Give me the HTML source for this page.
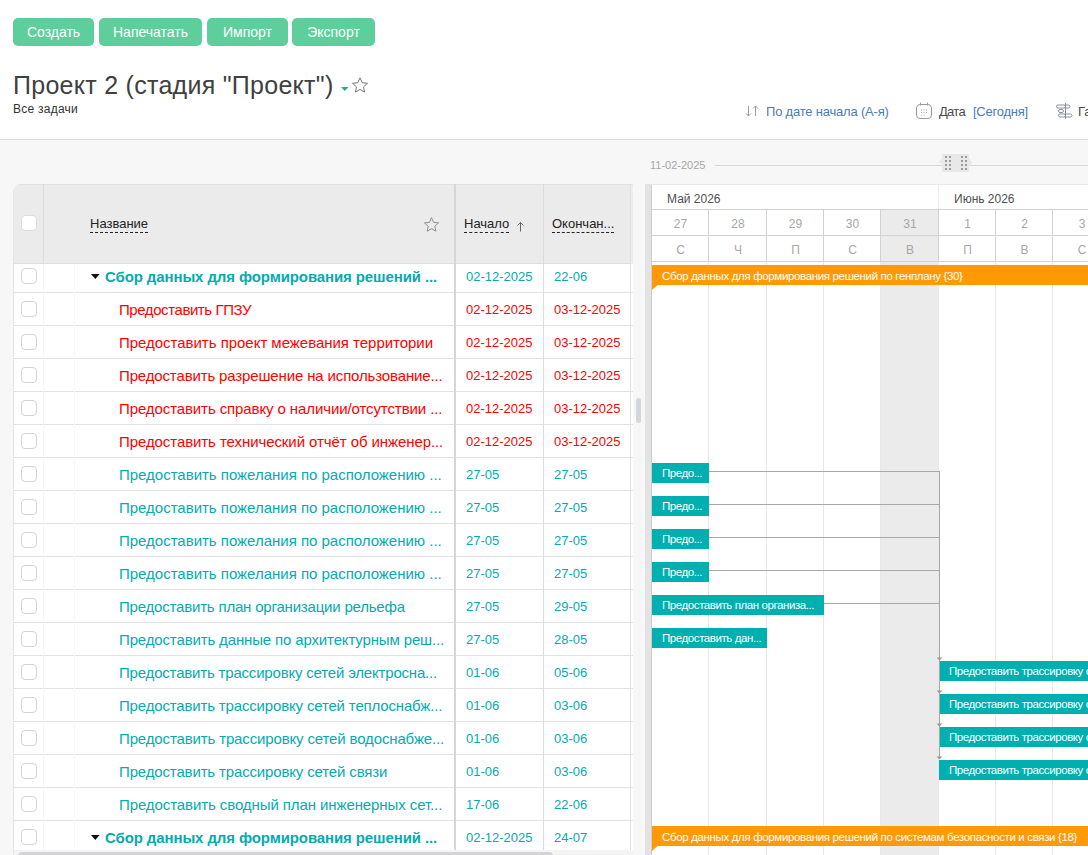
<!DOCTYPE html>
<html lang="ru"><head><meta charset="utf-8"><title>Проект 2</title>
<style>
*{box-sizing:border-box;margin:0;padding:0}
html,body{width:1088px;height:855px;overflow:hidden;background:#f7f7f7;font-family:"Liberation Sans",sans-serif;color:#333}
.abs{position:absolute}
#top{position:absolute;left:0;top:0;width:1088px;height:140px;background:#fff;border-bottom:1px solid #dedede}
.btn{position:absolute;top:18px;height:28px;border-radius:5px;background:#5ecf9c;color:#fff;font-size:14px;line-height:28px;text-align:center;white-space:nowrap}
#title{position:absolute;left:13px;top:70px;font-size:25px;line-height:30px;color:#404040;white-space:nowrap;letter-spacing:.27px}
#sub{letter-spacing:.25px;position:absolute;left:13px;top:101px;font-size:12px;line-height:16px;color:#333;white-space:nowrap}
.tb{position:absolute;top:103px;font-size:13px;line-height:18px;white-space:nowrap;color:#4d7bb7}
#grid{position:absolute;left:13px;top:184px;width:620px;height:671px;background:#fff;border-top-left-radius:8px;overflow:hidden;border-left:1px solid #e6e6e6}
#ghead{position:absolute;left:-1px;top:0;width:621px;height:80px;background:#ebebeb;border-top:1px solid #e2e2e2;border-bottom:1px solid #dfdfdf}
.row{position:absolute;left:-1px;width:620px;height:33px;border-bottom:1px solid #e2e2e2;font-size:15px;line-height:34px;white-space:nowrap}
.row span{position:absolute;top:0}
.cb{position:absolute;left:8px;width:16px;height:16px;border:1px solid #d4d4d4;border-radius:4px;background:#fff}
.g{color:#05abae;font-weight:bold}
.t{color:#05abae}
.r{color:#ff0000}
.d{font-size:13px}
.vl{position:absolute;top:0;bottom:0;background:#e2e2e2}
#gantt{position:absolute;left:651px;top:184px;width:437px;height:671px;background:#fff;overflow:hidden}
.bar{position:absolute;height:20px;background:#00b0b0;color:#fff;font-size:11.5px;letter-spacing:-.42px;line-height:21px;padding-left:10px;white-space:nowrap;overflow:hidden}
.obar{position:absolute;left:1px;height:20px;background:#ff9a05;color:#fff;font-size:11.5px;letter-spacing:-.35px;line-height:22px;overflow:hidden;padding-left:10px;white-space:nowrap;width:437px}
.hl{position:absolute;height:1px;background:#a8a8a8}
.hd{position:absolute;font-size:12px;line-height:16px}
</style></head><body>
<div id="top">
<div class="btn" style="left:13px;width:81px">Создать</div>
<div class="btn" style="left:99px;width:103px">Напечатать</div>
<div class="btn" style="left:207px;width:81px">Импорт</div>
<div class="btn" style="left:292px;width:83px">Экспорт</div>
<div id="title">Проект 2 (стадия "Проект")</div>
<svg class="abs" style="left:340px;top:86px" width="10" height="6" viewBox="0 0 10 6"><path d="M1 1h7.500L4.750 5z" fill="#1fb47a"/></svg>
<svg class="abs" style="left:351px;top:76px" width="18" height="18" viewBox="0 0 18 18"><path d="M9 1.800l2.200 4.900 5.300.6-4 3.600 1.100 5.200L9 13.400l-4.600 2.700 1.100-5.200-4-3.600 5.300-.6z" fill="none" stroke="#777" stroke-width="1"/></svg>
<div id="sub">Все задачи</div>
<svg class="abs" style="left:744px;top:104px" width="16" height="14" viewBox="0 0 16 14" fill="none" stroke="#9aa0a8" stroke-width="1"><path d="M4.500 2v10M2 9.500L4.500 12 7 9.500M11.500 12V2M9 4.500L11.500 2 14 4.500"/></svg>
<div class="tb" style="left:766px;letter-spacing:-.2px">По дате начала (А-я)</div>
<svg class="abs" style="left:915px;top:101px" width="18" height="19" viewBox="0 0 18 19" fill="none" stroke="#9a9a9a" stroke-width="1"><rect x="1.500" y="3.500" width="15" height="14" rx="3.500"/><path d="M5.500 1.500v3M12.500 1.500v3"/><path d="M6 9h1M8.500 9h1M11 9h1M6 11.500h1M8.500 11.500h1M11 11.500h1M6 14h1M8.500 14h1" stroke="#b0b0b0"/></svg>
<div class="tb" style="left:939px;color:#4a4a4a;letter-spacing:-.7px">Дата</div>
<div class="tb" style="left:973px;letter-spacing:-.25px">[Сегодня]</div>
<svg class="abs" style="left:1055px;top:102px" width="18" height="18" viewBox="0 0 18 18" fill="none" stroke="#8a909a" stroke-width="1"><path d="M10.500 1v16"/><rect x="1.500" y="3" width="9" height="3" rx="1.500"/><path d="M10.500 3h3a1.500 1.500 0 0 1 0 3h-3"/><rect x="3.500" y="7.500" width="5" height="3" rx="1.500"/><rect x="3.500" y="12" width="7" height="3" rx="1.500"/><path d="M10.500 12h5a1.500 1.500 0 0 1 0 3h-5"/></svg>
<div class="tb" style="left:1078px;color:#4a4a4a">Га</div>
</div>

<div class="abs" style="left:650px;top:158px;font-size:11px;line-height:14px;color:#a6a6a6;white-space:nowrap">11-02-2025</div>
<div class="abs" style="left:715px;top:165px;width:373px;height:1px;background:#d6d6d6"></div>
<svg class="abs" style="left:938px;top:154px" width="35" height="18" viewBox="0 0 35 18"><path d="M4 9.500L0.500 8.500 4 4.500zM31 4.500L34.500 8.500 31 12.500z" fill="#e8e8e8"/><rect x="4" y="0" width="27" height="18" fill="#e8e8e8"/><g fill="#9a9a9a"><g id="dd"><rect x="7" y="2" width="2" height="2"/><rect x="11" y="2" width="2" height="2"/><rect x="7" y="6" width="2" height="2"/><rect x="11" y="6" width="2" height="2"/><rect x="7" y="10" width="2" height="2"/><rect x="11" y="10" width="2" height="2"/><rect x="7" y="14" width="2" height="2"/><rect x="11" y="14" width="2" height="2"/></g><use href="#dd" x="16"/></g></svg>

<div id="grid">
<div class="row" style="top:76px"><i class="cb" style="top:8px"></i><svg class="abs" style="left:78px;top:13px" width="9" height="7" viewBox="0 0 9 7"><path d="M0 1h8.600L4.300 6z" fill="#111"/></svg><span class="g" style="left:92px;letter-spacing:-0.108px">Сбор данных для формирования решений ...</span><span class="d t" style="left:453px">02-12-2025</span><span class="d t" style="left:541px">22-06</span></div>
<div class="row" style="top:109px"><i class="cb" style="top:8px"></i><span class="r" style="left:106px;letter-spacing:-0.425px">Предоставить ГПЗУ</span><span class="d r" style="left:453px">02-12-2025</span><span class="d r" style="left:541px">03-12-2025</span></div>
<div class="row" style="top:142px"><i class="cb" style="top:8px"></i><span class="r" style="left:106px;letter-spacing:-0.026px">Предоставить проект межевания территории</span><span class="d r" style="left:453px">02-12-2025</span><span class="d r" style="left:541px">03-12-2025</span></div>
<div class="row" style="top:175px"><i class="cb" style="top:8px"></i><span class="r" style="left:106px;letter-spacing:-0.143px">Предоставить разрешение на использование...</span><span class="d r" style="left:453px">02-12-2025</span><span class="d r" style="left:541px">03-12-2025</span></div>
<div class="row" style="top:208px"><i class="cb" style="top:8px"></i><span class="r" style="left:106px;letter-spacing:-0.100px">Предоставить справку о наличии/отсутствии ...</span><span class="d r" style="left:453px">02-12-2025</span><span class="d r" style="left:541px">03-12-2025</span></div>
<div class="row" style="top:241px"><i class="cb" style="top:8px"></i><span class="r" style="left:106px;letter-spacing:-0.079px">Предоставить технический отчёт об инженер...</span><span class="d r" style="left:453px">02-12-2025</span><span class="d r" style="left:541px">03-12-2025</span></div>
<div class="row" style="top:274px"><i class="cb" style="top:8px"></i><span class="t" style="left:106px;letter-spacing:-0.012px">Предоставить пожелания по расположению ...</span><span class="d t" style="left:453px">27-05</span><span class="d t" style="left:541px">27-05</span></div>
<div class="row" style="top:307px"><i class="cb" style="top:8px"></i><span class="t" style="left:106px;letter-spacing:-0.012px">Предоставить пожелания по расположению ...</span><span class="d t" style="left:453px">27-05</span><span class="d t" style="left:541px">27-05</span></div>
<div class="row" style="top:340px"><i class="cb" style="top:8px"></i><span class="t" style="left:106px;letter-spacing:-0.012px">Предоставить пожелания по расположению ...</span><span class="d t" style="left:453px">27-05</span><span class="d t" style="left:541px">27-05</span></div>
<div class="row" style="top:373px"><i class="cb" style="top:8px"></i><span class="t" style="left:106px;letter-spacing:-0.012px">Предоставить пожелания по расположению ...</span><span class="d t" style="left:453px">27-05</span><span class="d t" style="left:541px">27-05</span></div>
<div class="row" style="top:406px"><i class="cb" style="top:8px"></i><span class="t" style="left:106px;letter-spacing:-0.194px">Предоставить план организации рельефа</span><span class="d t" style="left:453px">27-05</span><span class="d t" style="left:541px">29-05</span></div>
<div class="row" style="top:439px"><i class="cb" style="top:8px"></i><span class="t" style="left:106px;letter-spacing:-0.143px">Предоставить данные по архитектурным реш...</span><span class="d t" style="left:453px">27-05</span><span class="d t" style="left:541px">28-05</span></div>
<div class="row" style="top:472px"><i class="cb" style="top:8px"></i><span class="t" style="left:106px;letter-spacing:-0.186px">Предоставить трассировку сетей электросна...</span><span class="d t" style="left:453px">01-06</span><span class="d t" style="left:541px">05-06</span></div>
<div class="row" style="top:505px"><i class="cb" style="top:8px"></i><span class="t" style="left:106px;letter-spacing:-0.163px">Предоставить трассировку сетей теплоснабж...</span><span class="d t" style="left:453px">01-06</span><span class="d t" style="left:541px">03-06</span></div>
<div class="row" style="top:538px"><i class="cb" style="top:8px"></i><span class="t" style="left:106px;letter-spacing:-0.140px">Предоставить трассировку сетей водоснабже...</span><span class="d t" style="left:453px">01-06</span><span class="d t" style="left:541px">03-06</span></div>
<div class="row" style="top:571px"><i class="cb" style="top:8px"></i><span class="t" style="left:106px;letter-spacing:-0.149px">Предоставить трассировку сетей связи</span><span class="d t" style="left:453px">01-06</span><span class="d t" style="left:541px">03-06</span></div>
<div class="row" style="top:604px"><i class="cb" style="top:8px"></i><span class="t" style="left:106px;letter-spacing:-0.090px">Предоставить сводный план инженерных сет...</span><span class="d t" style="left:453px">17-06</span><span class="d t" style="left:541px">22-06</span></div>
<div class="row" style="top:637px"><i class="cb" style="top:8px"></i><svg class="abs" style="left:78px;top:13px" width="9" height="7" viewBox="0 0 9 7"><path d="M0 1h8.600L4.300 6z" fill="#111"/></svg><span class="g" style="left:92px;letter-spacing:-0.108px">Сбор данных для формирования решений ...</span><span class="d t" style="left:453px">02-12-2025</span><span class="d t" style="left:541px">24-07</span></div>
<div class="vl" style="left:29px;width:1px;background:#f6f6f6"></div>
<div class="vl" style="left:60px;width:1px;background:#f8f8f8"></div>
<div id="ghead">
<i class="cb" style="top:30px;left:8px;border-color:#dcdcdc"></i>
<div class="abs" style="left:77px;top:30px;font-size:13px;line-height:17px;color:#222;border-bottom:1px dashed #222;white-space:nowrap">Название</div>
<svg class="abs" style="left:410px;top:31px" width="17" height="17" viewBox="0 0 18 18"><path d="M9 1.800l2.200 4.900 5.300.6-4 3.600 1.100 5.200L9 13.400l-4.600 2.700 1.100-5.200-4-3.600 5.300-.6z" fill="none" stroke="#8a8a8a" stroke-width="1"/></svg>
<div class="abs" style="left:451px;top:30px;font-size:13px;line-height:17px;color:#222;border-bottom:1px dashed #222;white-space:nowrap">Начало</div>
<svg class="abs" style="left:503px;top:36px" width="9" height="11" viewBox="0 0 9 11" fill="none" stroke="#666" stroke-width="1"><path d="M4.500 10.500V1.500M1.500 4.500L4.500 1.500 7.500 4.500"/></svg>
<div class="abs" style="left:539px;top:30px;font-size:13px;line-height:17px;color:#222;border-bottom:1px dashed #222;white-space:nowrap">Окончан...</div>
</div>
<div class="vl" style="left:29px;width:1px;height:79px;background:#dcdcdc"></div>
<div class="vl" style="left:440px;width:2px;background:#d6d6d6"></div>
<div class="vl" style="left:529px;width:1px;background:#dcdcdc"></div>
<div class="abs" style="left:617px;top:1px;width:3px;height:79px;background:#eeeeee"></div>
<div class="vl" style="left:616px;width:1px;background:#e0e0e0"></div>
<div class="abs" style="left:-1px;top:666px;width:620px;height:5px;background:#f4f4f4"></div>
<div class="abs" style="left:4px;top:668px;width:535px;height:4px;background:#d4d4d8;border-radius:4px 4px 0 0"></div>
</div>

<div class="abs" style="left:645px;top:184px;width:6px;height:671px;background:#e3e3e3"></div>
<div class="abs" style="left:636px;top:398px;width:5px;height:25px;background:#d3d6da;border-radius:3px"></div>

<div id="gantt">
<div class="abs" style="left:229px;top:25px;width:59px;height:646px;background:#ebebeb"></div>
<div class="abs" style="left:0;top:0;width:1px;height:671px;background:#cdcdcd"></div>
<div class="abs" style="left:57px;top:25px;width:1px;height:646px;background:#e8e8e8"></div>
<div class="abs" style="left:57px;top:25px;width:1px;height:53px;background:#d2d2d2"></div>
<div class="abs" style="left:115px;top:25px;width:1px;height:646px;background:#e8e8e8"></div>
<div class="abs" style="left:115px;top:25px;width:1px;height:53px;background:#d2d2d2"></div>
<div class="abs" style="left:172px;top:25px;width:1px;height:646px;background:#e8e8e8"></div>
<div class="abs" style="left:172px;top:25px;width:1px;height:53px;background:#d2d2d2"></div>
<div class="abs" style="left:229px;top:25px;width:1px;height:646px;background:#e8e8e8"></div>
<div class="abs" style="left:229px;top:25px;width:1px;height:53px;background:#d2d2d2"></div>
<div class="abs" style="left:287px;top:25px;width:1px;height:646px;background:#e8e8e8"></div>
<div class="abs" style="left:287px;top:25px;width:1px;height:53px;background:#d2d2d2"></div>
<div class="abs" style="left:344px;top:25px;width:1px;height:646px;background:#e8e8e8"></div>
<div class="abs" style="left:344px;top:25px;width:1px;height:53px;background:#d2d2d2"></div>
<div class="abs" style="left:401px;top:25px;width:1px;height:646px;background:#e8e8e8"></div>
<div class="abs" style="left:401px;top:25px;width:1px;height:53px;background:#d2d2d2"></div>
<div class="abs" style="left:287px;top:0;width:1px;height:26px;background:#ececec"></div>
<div class="abs" style="left:0;top:0;width:437px;height:1px;background:#e8e8e8"></div>
<div class="abs" style="left:0;top:25px;width:437px;height:1px;background:#d2d2d2"></div>
<div class="abs" style="left:0;top:51px;width:437px;height:1px;background:#d2d2d2"></div>
<div class="abs" style="left:0;top:77px;width:437px;height:1px;background:#d2d2d2"></div>
<div class="hd" style="left:16px;top:7px;color:#505050">Май 2026</div>
<div class="hd" style="left:303px;top:7px;color:#505050">Июнь 2026</div>
<div class="hd" style="left:1px;top:32px;width:57px;text-align:center;color:#a6a6a6">27</div>
<div class="hd" style="left:1px;top:58px;width:57px;text-align:center;color:#a6a6a6">С</div>
<div class="hd" style="left:58px;top:32px;width:58px;text-align:center;color:#a6a6a6">28</div>
<div class="hd" style="left:58px;top:58px;width:58px;text-align:center;color:#a6a6a6">Ч</div>
<div class="hd" style="left:116px;top:32px;width:57px;text-align:center;color:#a6a6a6">29</div>
<div class="hd" style="left:116px;top:58px;width:57px;text-align:center;color:#a6a6a6">П</div>
<div class="hd" style="left:173px;top:32px;width:57px;text-align:center;color:#a6a6a6">30</div>
<div class="hd" style="left:173px;top:58px;width:57px;text-align:center;color:#a6a6a6">С</div>
<div class="hd" style="left:230px;top:32px;width:58px;text-align:center;color:#a6a6a6">31</div>
<div class="hd" style="left:230px;top:58px;width:58px;text-align:center;color:#a6a6a6">В</div>
<div class="hd" style="left:288px;top:32px;width:57px;text-align:center;color:#a6a6a6">1</div>
<div class="hd" style="left:288px;top:58px;width:57px;text-align:center;color:#a6a6a6">П</div>
<div class="hd" style="left:345px;top:32px;width:57px;text-align:center;color:#a6a6a6">2</div>
<div class="hd" style="left:345px;top:58px;width:57px;text-align:center;color:#a6a6a6">В</div>
<div class="hd" style="left:402px;top:32px;width:58px;text-align:center;color:#a6a6a6">3</div>
<div class="hd" style="left:402px;top:58px;width:58px;text-align:center;color:#a6a6a6">С</div>
<div class="obar" style="top:81px">Сбор данных для формирования решений по генплану {30}</div>
<svg class="abs" style="left:1px;top:101px" width="6" height="5" viewBox="0 0 6 5"><path d="M0 0h5.500L0 5z" fill="#ff9a05"/></svg>
<div class="obar" style="top:642px">Сбор данных для формирования решений по системам безопасности и связи {18}</div>
<svg class="abs" style="left:1px;top:662px" width="6" height="5" viewBox="0 0 6 5"><path d="M0 0h5.500L0 5z" fill="#ff9a05"/></svg>
<div class="bar" style="left:1px;top:279px;width:57px">Предо...</div>
<div class="bar" style="left:1px;top:312px;width:57px">Предо...</div>
<div class="bar" style="left:1px;top:345px;width:57px">Предо...</div>
<div class="bar" style="left:1px;top:378px;width:57px">Предо...</div>
<div class="bar" style="left:1px;top:411px;width:172px">Предоставить план организа...</div>
<div class="bar" style="left:1px;top:444px;width:115px">Предоставить дан...</div>
<div class="bar" style="left:288px;top:477px;width:200px">Предоставить трассировку сетей</div>
<div class="bar" style="left:288px;top:510px;width:200px">Предоставить трассировку сетей</div>
<div class="bar" style="left:288px;top:543px;width:200px">Предоставить трассировку сетей</div>
<div class="bar" style="left:288px;top:576px;width:200px">Предоставить трассировку сетей</div>
<div class="hl" style="left:58px;top:287px;width:231px"></div>
<div class="hl" style="left:58px;top:320px;width:231px"></div>
<div class="hl" style="left:58px;top:353px;width:231px"></div>
<div class="hl" style="left:58px;top:386px;width:231px"></div>
<div class="hl" style="left:173px;top:419px;width:116px"></div>
<div class="abs" style="left:288px;top:287px;width:1px;height:288px;background:#a8a8a8"></div>
<svg class="abs" style="left:285px;top:473px" width="7" height="4" viewBox="0 0 7 4"><path d="M0.500 0.500h6L3.500 3.500z" fill="#9a9a9a"/></svg>
<svg class="abs" style="left:285px;top:506px" width="7" height="4" viewBox="0 0 7 4"><path d="M0.500 0.500h6L3.500 3.500z" fill="#9a9a9a"/></svg>
<svg class="abs" style="left:285px;top:539px" width="7" height="4" viewBox="0 0 7 4"><path d="M0.500 0.500h6L3.500 3.500z" fill="#9a9a9a"/></svg>
<svg class="abs" style="left:285px;top:572px" width="7" height="4" viewBox="0 0 7 4"><path d="M0.500 0.500h6L3.500 3.500z" fill="#9a9a9a"/></svg>
</div>
</body></html>
